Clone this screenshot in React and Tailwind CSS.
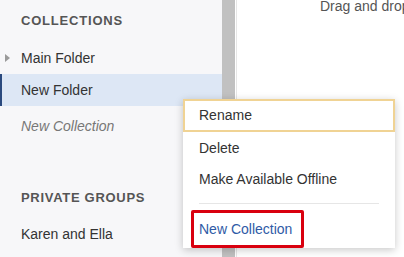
export default function App() {
  const font = { fontFamily: '"Liberation Sans", Arial, sans-serif' };
  return (
    <div className="relative flex h-[257px] w-[404px] overflow-hidden bg-white" style={font}>
      {/* Sidebar */}
      <div className="flex w-[222px] shrink-0 flex-col bg-[#f7f7f9]">
        <div className="flex h-[42px] items-center pl-[21px] text-[13px] font-bold tracking-[0.8px] text-[#555]">
          COLLECTIONS
        </div>
        <div className="relative flex h-[32px] items-center pl-[21px] text-[14px] text-[#333]">
          <svg className="absolute left-[5px] top-[12px]" width="5" height="8" viewBox="0 0 5 8">
            <path d="M0 0 L5 4 L0 8 Z" fill="#9a9a9a" />
          </svg>
          Main Folder
        </div>
        <div className="flex h-[32px] items-center border-l-2 border-[#2b4a7e] bg-[#dde7f5] pl-[19px] text-[14px] text-[#333]">
          New Folder
        </div>
        <div className="flex h-[40px] items-center pl-[21px] text-[14px] italic text-[#777]">
          New Collection
        </div>
        <div className="mt-[32px] flex h-[40px] items-center pl-[21px] text-[13px] font-bold tracking-[0.7px] text-[#555]">
          PRIVATE GROUPS
        </div>
        <div className="flex h-[32px] items-center pl-[21px] text-[14px] text-[#333]">
          Karen and Ella
        </div>
      </div>
      {/* Scrollbar */}
      <div className="w-[13px] shrink-0 bg-[#c1c1c1]" />
      <div className="w-[1px] shrink-0 bg-white" />
      <div className="w-[1px] shrink-0 bg-[#e6e6e6]" />
      {/* Content */}
      <div className="flex-1 pl-[83px]">
        <div className="-mt-[2px] whitespace-nowrap text-[14px] leading-[16px] text-[#555]">
          Drag and drop
        </div>
      </div>

      {/* Context menu */}
      <div className="absolute left-[183px] top-[99px] flex h-[149px] w-[212px] flex-col bg-white shadow-[0_2px_8px_rgba(0,0,0,0.22)]">
        <div className="flex h-[33px] items-center border-2 border-[#f0d394] pl-[14px] text-[14px] text-[#333]">
          Rename
        </div>
        <div className="flex h-[32px] items-center pl-[16px] text-[14px] text-[#333]">
          Delete
        </div>
        <div className="flex h-[31px] items-center pl-[16px] text-[14px] text-[#333]">
          Make Available Offline
        </div>
        <div className="mx-[16px] mt-[8px] h-[1px] bg-[#e6e6e6]" />
        <div className="ml-[8px] mt-[6px] flex h-[38px] w-[113px] items-center rounded-[2px] border-[3px] border-[#d9000f] pl-[5px] text-[14px] text-[#2f5ba6]">
          New Collection
        </div>
      </div>
    </div>
  );
}
